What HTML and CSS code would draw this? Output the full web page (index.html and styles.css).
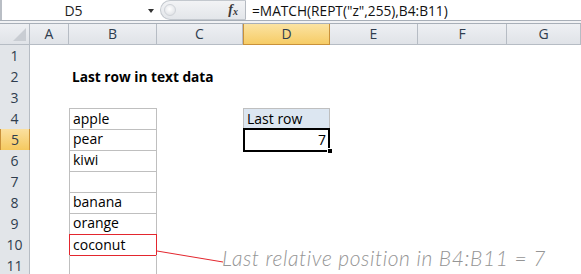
FILE: index.html
```html
<!DOCTYPE html>
<html lang="en">
  <head>
    <meta charset="UTF-8" />
    <title>Last row in text data</title>
    <link rel="stylesheet" href="styles.css">
  </head>
  <body>
    <div class="app">
      <div class="fbar">
        <div class="namebox">D5</div>
        <div class="nb-arrow"></div>
        <div class="fx-pill"><span class="knob"></span><span class="fx">f<sub>x</sub></span></div>
        <div class="formula">=MATCH(REPT("z",255),B4:B11)</div>
      </div>
      <div class="rule"></div>

      <div class="sheet">
        <div class="row head">
          <div class="corner"><span class="tri"></span></div>
          <div class="ch">A</div>
          <div class="ch">B</div>
          <div class="ch">C</div>
          <div class="ch sel">D</div>
          <div class="ch">E</div>
          <div class="ch">F</div>
          <div class="ch">G</div>
        </div>
        <div class="row">
          <div class="rh">1</div><div></div><div></div><div></div><div></div><div></div><div></div><div></div>
        </div>
        <div class="row">
          <div class="rh">2</div><div></div><div class="cell title">Last row in text data</div><div></div><div></div><div></div><div></div><div></div>
        </div>
        <div class="row">
          <div class="rh">3</div><div></div><div></div><div></div><div></div><div></div><div></div><div></div>
        </div>
        <div class="row">
          <div class="rh">4</div><div></div><div class="cell list first">apple</div><div></div><div class="cell label">Last row</div><div></div><div></div><div></div>
        </div>
        <div class="row">
          <div class="rh sel">5</div><div></div><div class="cell list">pear</div><div></div><div class="cell num active">7<span class="handle"></span></div><div></div><div></div><div></div>
        </div>
        <div class="row">
          <div class="rh">6</div><div></div><div class="cell list">kiwi</div><div></div><div></div><div></div><div></div><div></div>
        </div>
        <div class="row">
          <div class="rh">7</div><div></div><div class="cell list"></div><div></div><div></div><div></div><div></div><div></div>
        </div>
        <div class="row">
          <div class="rh">8</div><div></div><div class="cell list">banana</div><div></div><div></div><div></div><div></div><div></div>
        </div>
        <div class="row">
          <div class="rh">9</div><div></div><div class="cell list">orange</div><div></div><div></div><div></div><div></div><div></div>
        </div>
        <div class="row">
          <div class="rh">10</div><div></div><div class="cell list mark">coconut</div><div></div><div></div><div></div><div></div><div></div>
        </div>
        <div class="row">
          <div class="rh">11</div><div></div><div class="cell list"></div><div></div><div></div><div></div><div></div><div></div>
        </div>
      </div>

      <!-- callout drawn over the sheet -->
      <svg class="leader" width="581" height="274" viewBox="0 0 581 274">
        <line x1="157" y1="251" x2="223" y2="262" stroke="#e3262e" stroke-width="1"/>
      </svg>
      <div class="note">Last relative position in B4:B11 = 7</div>
    </div>
  </body>
</html>
```

FILE: styles.css
```css
*{
    margin: 0;
    padding: 0;
    box-sizing: border-box;
}
body{
    background: white;
    overflow: hidden;
    font-family: 'Open Sans', 'Liberation Sans', sans-serif;
}
.app{
    position: relative;
    width: 581px;
    height: 274px;
    overflow: hidden;
}

/* formula bar */
.fbar{
    display: flex;
    align-items: center;
    height: 20px;
    border-left: 2px solid #b9bec5;
}
.namebox{
    width: 143px;
    text-align: center;
    font-size: 14px;
    color: #1e1e1e;
}
.nb-arrow{
    width: 0;
    height: 0;
    border-left: 3.5px solid transparent;
    border-right: 3.5px solid transparent;
    border-top: 4px solid #333;
    margin: 1px 6px 0 3px;
}
.fx-pill{
    position: relative;
    display: flex;
    align-items: center;
    justify-content: flex-end;
    width: 86px;
    height: 20px;
    border: 1px solid #c3c8ce;
    border-right: 1px solid #b5bac1;
    border-radius: 11px 0 0 11px;
    background: linear-gradient(#f2f3f5, #e3e6ea);
    padding-right: 7px;
}
.knob{
    position: absolute;
    left: 3px;
    top: 3px;
    width: 12px;
    height: 12px;
    border-radius: 50%;
    background: radial-gradient(circle at 45% 40%, #ffffff, #d8dbe0);
    border: 1px solid #cfd3d8;
}
.fx{
    font-family: 'Liberation Serif', serif;
    font-style: italic;
    font-weight: bold;
    font-size: 14px;
    color: #3a3a3a;
}
.fx sub{
    font-size: 10px;
    vertical-align: -1px;
}
.formula{
    padding-left: 6px;
    font-size: 13.7px;
    color: #111;
    white-space: nowrap;
}
.rule{
    height: 4px;
    border-top: 1px solid #a8afb8;
    border-bottom: 1px solid #a8afb8;
    background: #f1f2f4;
}

/* grid */
.row{
    display: grid;
    grid-template-columns: 30px 39px 88px 86px 87px 88px 89px 74px;
    height: 21px;
}
.head{
    background: linear-gradient(#eef0f3, #dfe2e7);
}
.corner{
    position: relative;
    border-right: 1px solid #b6bcc4;
    border-bottom: 1px solid #b6bcc4;
}
.tri{
    position: absolute;
    right: 3px;
    bottom: 3px;
    width: 0;
    height: 0;
    border-left: 13px solid transparent;
    border-bottom: 13px solid #c9cdd3;
}
.ch{
    border-right: 1px solid #b6bcc4;
    border-bottom: 1px solid #b6bcc4;
    text-align: center;
    font-size: 14px;
    line-height: 20px;
    color: #2f3d4e;
}
.ch.sel{
    background: linear-gradient(#fbe3a2, #f6cc66);
    border: 1px solid #c9913a;
    border-top: none;
}
.rh{
    background: #e2e5e9;
    border-right: 1px solid #b6bcc4;
    border-bottom: 1px solid #c8ccd2;
    text-align: center;
    font-size: 14px;
    line-height: 21px;
    color: #2f3d4e;
}
.rh.sel{
    background: linear-gradient(#fbe0a0, #f5c95f);
    border: 1px solid #c9913a;
    border-top: none;
}

/* cells */
.cell{
    position: relative;
    padding: 0 3px;
    font-size: 14px;
    line-height: 21px;
    color: #000;
    white-space: nowrap;
}
.title{
    font-weight: bold;
    font-size: 13.7px;
}
.list{
    border-left: 1px solid #bfbfbf;
    border-right: 1px solid #bfbfbf;
    border-bottom: 1px solid #bfbfbf;
    line-height: 20px;
}
.list.first{
    border-top: 1px solid #bfbfbf;
}
.list.mark{
    border: 1px solid #e3262e;
}
.label{
    background: #dce6f1;
    border: 1px solid #bfbfbf;
    line-height: 19px;
}
.num{
    text-align: right;
    line-height: 20px;
}
.active{
    border: 2px solid #000;
    margin: -1px 0 -1px 0;
    line-height: 19px;
    padding-right: 2px;
}
.handle{
    position: absolute;
    right: -5px;
    bottom: -4px;
    width: 6px;
    height: 6px;
    background: #000;
    border: 1px solid #fff;
}

/* callout */
.leader{
    position: absolute;
    left: 0;
    top: 0;
    pointer-events: none;
}
.note{
    position: absolute;
    left: 222px;
    top: 245px;
    font-family: 'Lato', 'DejaVu Sans', sans-serif;
    font-style: italic;
    font-weight: 300;
    font-size: 21px;
    color: #959595;
    white-space: nowrap;
    letter-spacing: 0.6px;
}
```
